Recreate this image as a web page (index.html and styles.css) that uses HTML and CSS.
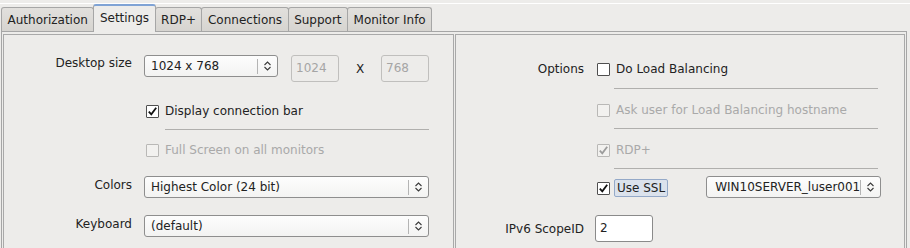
FILE: index.html
```html
<!DOCTYPE html>
<html>
<head>
<meta charset="utf-8">
<title>Settings</title>
<link rel="stylesheet" href="styles.css">
</head>
<body>
<div class="menuline"></div>
<div class="tabs">
	<div class="tab">Authorization</div>
	<div class="tab active">Settings</div>
	<div class="tab">RDP+</div>
	<div class="tab">Connections</div>
	<div class="tab">Support</div>
	<div class="tab">Monitor Info</div>
</div>
<div class="pane">
	<div class="group left">
		<div class="row">
			<div class="lbl">Desktop size</div>
			<div class="combo small"><span class="val">1024 x 768</span><span class="sep"></span><svg class="arr" width="7" height="10" viewBox="0 0 7 10"><path d="M0.5 4L3.5 1L6.5 4M0.5 6L3.5 9L6.5 6"/></svg></div>
			<div class="entry off first">1024</div>
			<span class="times">X</span>
			<div class="entry off">768</div>
		</div>
		<div class="check c1"><span class="box"><svg width="11" height="11" viewBox="0 0 11 11"><path d="M1.8 5.6L4.3 8.3L9.2 1.8"/></svg></span>Display connection bar</div>
		<div class="hr"></div>
		<div class="check dis c2"><span class="box"></span>Full Screen on all monitors</div>
		<div class="row r-combo">
			<div class="lbl">Colors</div>
			<div class="combo wide"><span class="val">Highest Color (24 bit)</span><span class="sep"></span><svg class="arr" width="7" height="10" viewBox="0 0 7 10"><path d="M0.5 4L3.5 1L6.5 4M0.5 6L3.5 9L6.5 6"/></svg></div>
		</div>
		<div class="row r-combo">
			<div class="lbl">Keyboard</div>
			<div class="combo wide"><span class="val">(default)</span><span class="sep"></span><svg class="arr" width="7" height="10" viewBox="0 0 7 10"><path d="M0.5 4L3.5 1L6.5 4M0.5 6L3.5 9L6.5 6"/></svg></div>
		</div>
	</div>
	<div class="group right">
		<div class="row r-opt">
			<div class="lbl">Options</div>
			<div class="check"><span class="box"></span>Do Load Balancing</div>
		</div>
		<div class="hr hr1"></div>
		<div class="check dis ind"><span class="box"></span>Ask user for Load Balancing hostname</div>
		<div class="hr"></div>
		<div class="check dis ind"><span class="box"><svg width="11" height="11" viewBox="0 0 11 11"><path d="M1.8 5.6L4.3 8.3L9.2 1.8"/></svg></span>RDP+</div>
		<div class="hr hr1"></div>
		<div class="row r-ssl">
			<div class="check ssl"><span class="box"><svg width="11" height="11" viewBox="0 0 11 11"><path d="M1.8 5.6L4.3 8.3L9.2 1.8"/></svg></span><span class="focus">Use SSL</span></div>
			<div class="combo server"><span class="val">WIN10SERVER_luser001</span><span class="sep"></span><svg class="arr" width="7" height="10" viewBox="0 0 7 10"><path d="M0.5 4L3.5 1L6.5 4M0.5 6L3.5 9L6.5 6"/></svg></div>
		</div>
		<div class="row r-ip">
			<div class="lbl">IPv6 ScopeID</div>
			<div class="entry ip">2</div>
		</div>
	</div>
</div>
</body>
</html>
```
FILE: styles.css
```css
*{box-sizing:border-box;}
body{margin:0;height:248px;overflow:hidden;background:#edecea;color:#222;
	font:12px "DejaVu Sans",sans-serif;}
.menuline{height:4px;border-bottom:1px solid #fff;}

/* tabs */
.tabs{display:flex;align-items:flex-end;height:27px;padding-left:1px;}
.tab{height:24px;line-height:24px;padding:0 5.5px;margin-right:-1px;white-space:nowrap;
	border:1px solid #a6a6a6;border-bottom:0;border-radius:3px 3px 0 0;
	background:linear-gradient(#e2e0dd,#d6d4d0);}
.tab.active{position:relative;z-index:1;height:28px;line-height:24px;margin-bottom:-1px;
	border-top:2px solid #7fa3d5;background:#edecea;}

/* pane with two group boxes */
.pane{display:flex;gap:1px;width:906px;margin-left:1px;padding:2px 1px 0;
	border:1px solid #a6a6a6;border-bottom:0;}
.group{height:260px;border:1px solid #a9a9a9;}
.left{width:451px;padding-top:20px;}
.right{width:450px;padding-top:25px;}

.row{display:flex;align-items:flex-start;}
.lbl{flex:none;width:128px;margin-right:12px;text-align:right;line-height:17px;}
.right .lbl{margin-right:11px;}

/* combo boxes */
.combo{display:flex;align-items:center;height:22px;border:1px solid #8e8e8e;border-radius:3px;
	background:linear-gradient(#fdfdfd,#f3f3f2);}
.combo .val{flex:1;padding-left:6px;white-space:nowrap;overflow:hidden;}
.combo .sep{width:1px;height:15px;background:#b4b4b4;}
.combo .arr{margin:0 6px 0 6px;fill:none;stroke:#3a3a3a;stroke-width:1.1;}
.small{width:134px;}
.wide{width:285px;}
.server{width:175px;margin-left:38px;}
.server .val{padding-left:8px;}

/* entries */
.entry{width:48px;height:27px;line-height:25px;padding-left:4px;border:1px solid #8a8a8a;
	border-radius:3px;background:#fff;}
.entry.off{border-color:#c0bfbd;background:transparent;color:#a5a5a5;}
.entry.first{margin-left:13px;}
.times{width:42px;line-height:28px;text-align:center;}
.ip{width:58px;}

/* check buttons */
.check{display:flex;align-items:center;height:18px;white-space:nowrap;}
.box{display:flex;align-items:center;justify-content:center;flex:none;width:13px;height:13px;
	margin-right:6px;border:1px solid #4f4f4f;border-radius:1px;background:#fff;}
.box svg{fill:none;stroke:#111;stroke-width:1.8;}
.check.dis{color:#a9a9a9;}
.check.dis .box{border-color:#b9b8b6;background:#f2f1ef;}
.check.dis .box svg{stroke:#9c9c9c;}
.left .check{margin-left:142px;}
.c1{margin-top:19px;}
.left .hr{margin-top:9px;}
.c2{margin-top:11px;}
.ind{margin-left:141px;margin-top:12px;}
.right .ind + .hr{margin-top:9px;}

.hr{height:1px;width:264px;margin:10px 0 0 161px;background:#b0afad;}
.right .hr{margin-left:158px;}
.right .hr1{margin-top:10px;}

.r-combo{margin-top:17px;}
.r-combo .lbl{line-height:19px;}
.r-opt .lbl{line-height:18px;}
.r-opt .check{margin-left:2px;}
.r-ssl{margin-top:7px;height:22px;}
.ssl{margin-left:141px;margin-top:3px;}
.focus{height:18px;line-height:16px;padding:0 2px;margin-left:-2px;border:1px solid #94a9c8;
	border-radius:2px;background:#dbe2ec;}
.r-ip{margin-top:17px;}
.r-ip .lbl{line-height:28px;}
```
